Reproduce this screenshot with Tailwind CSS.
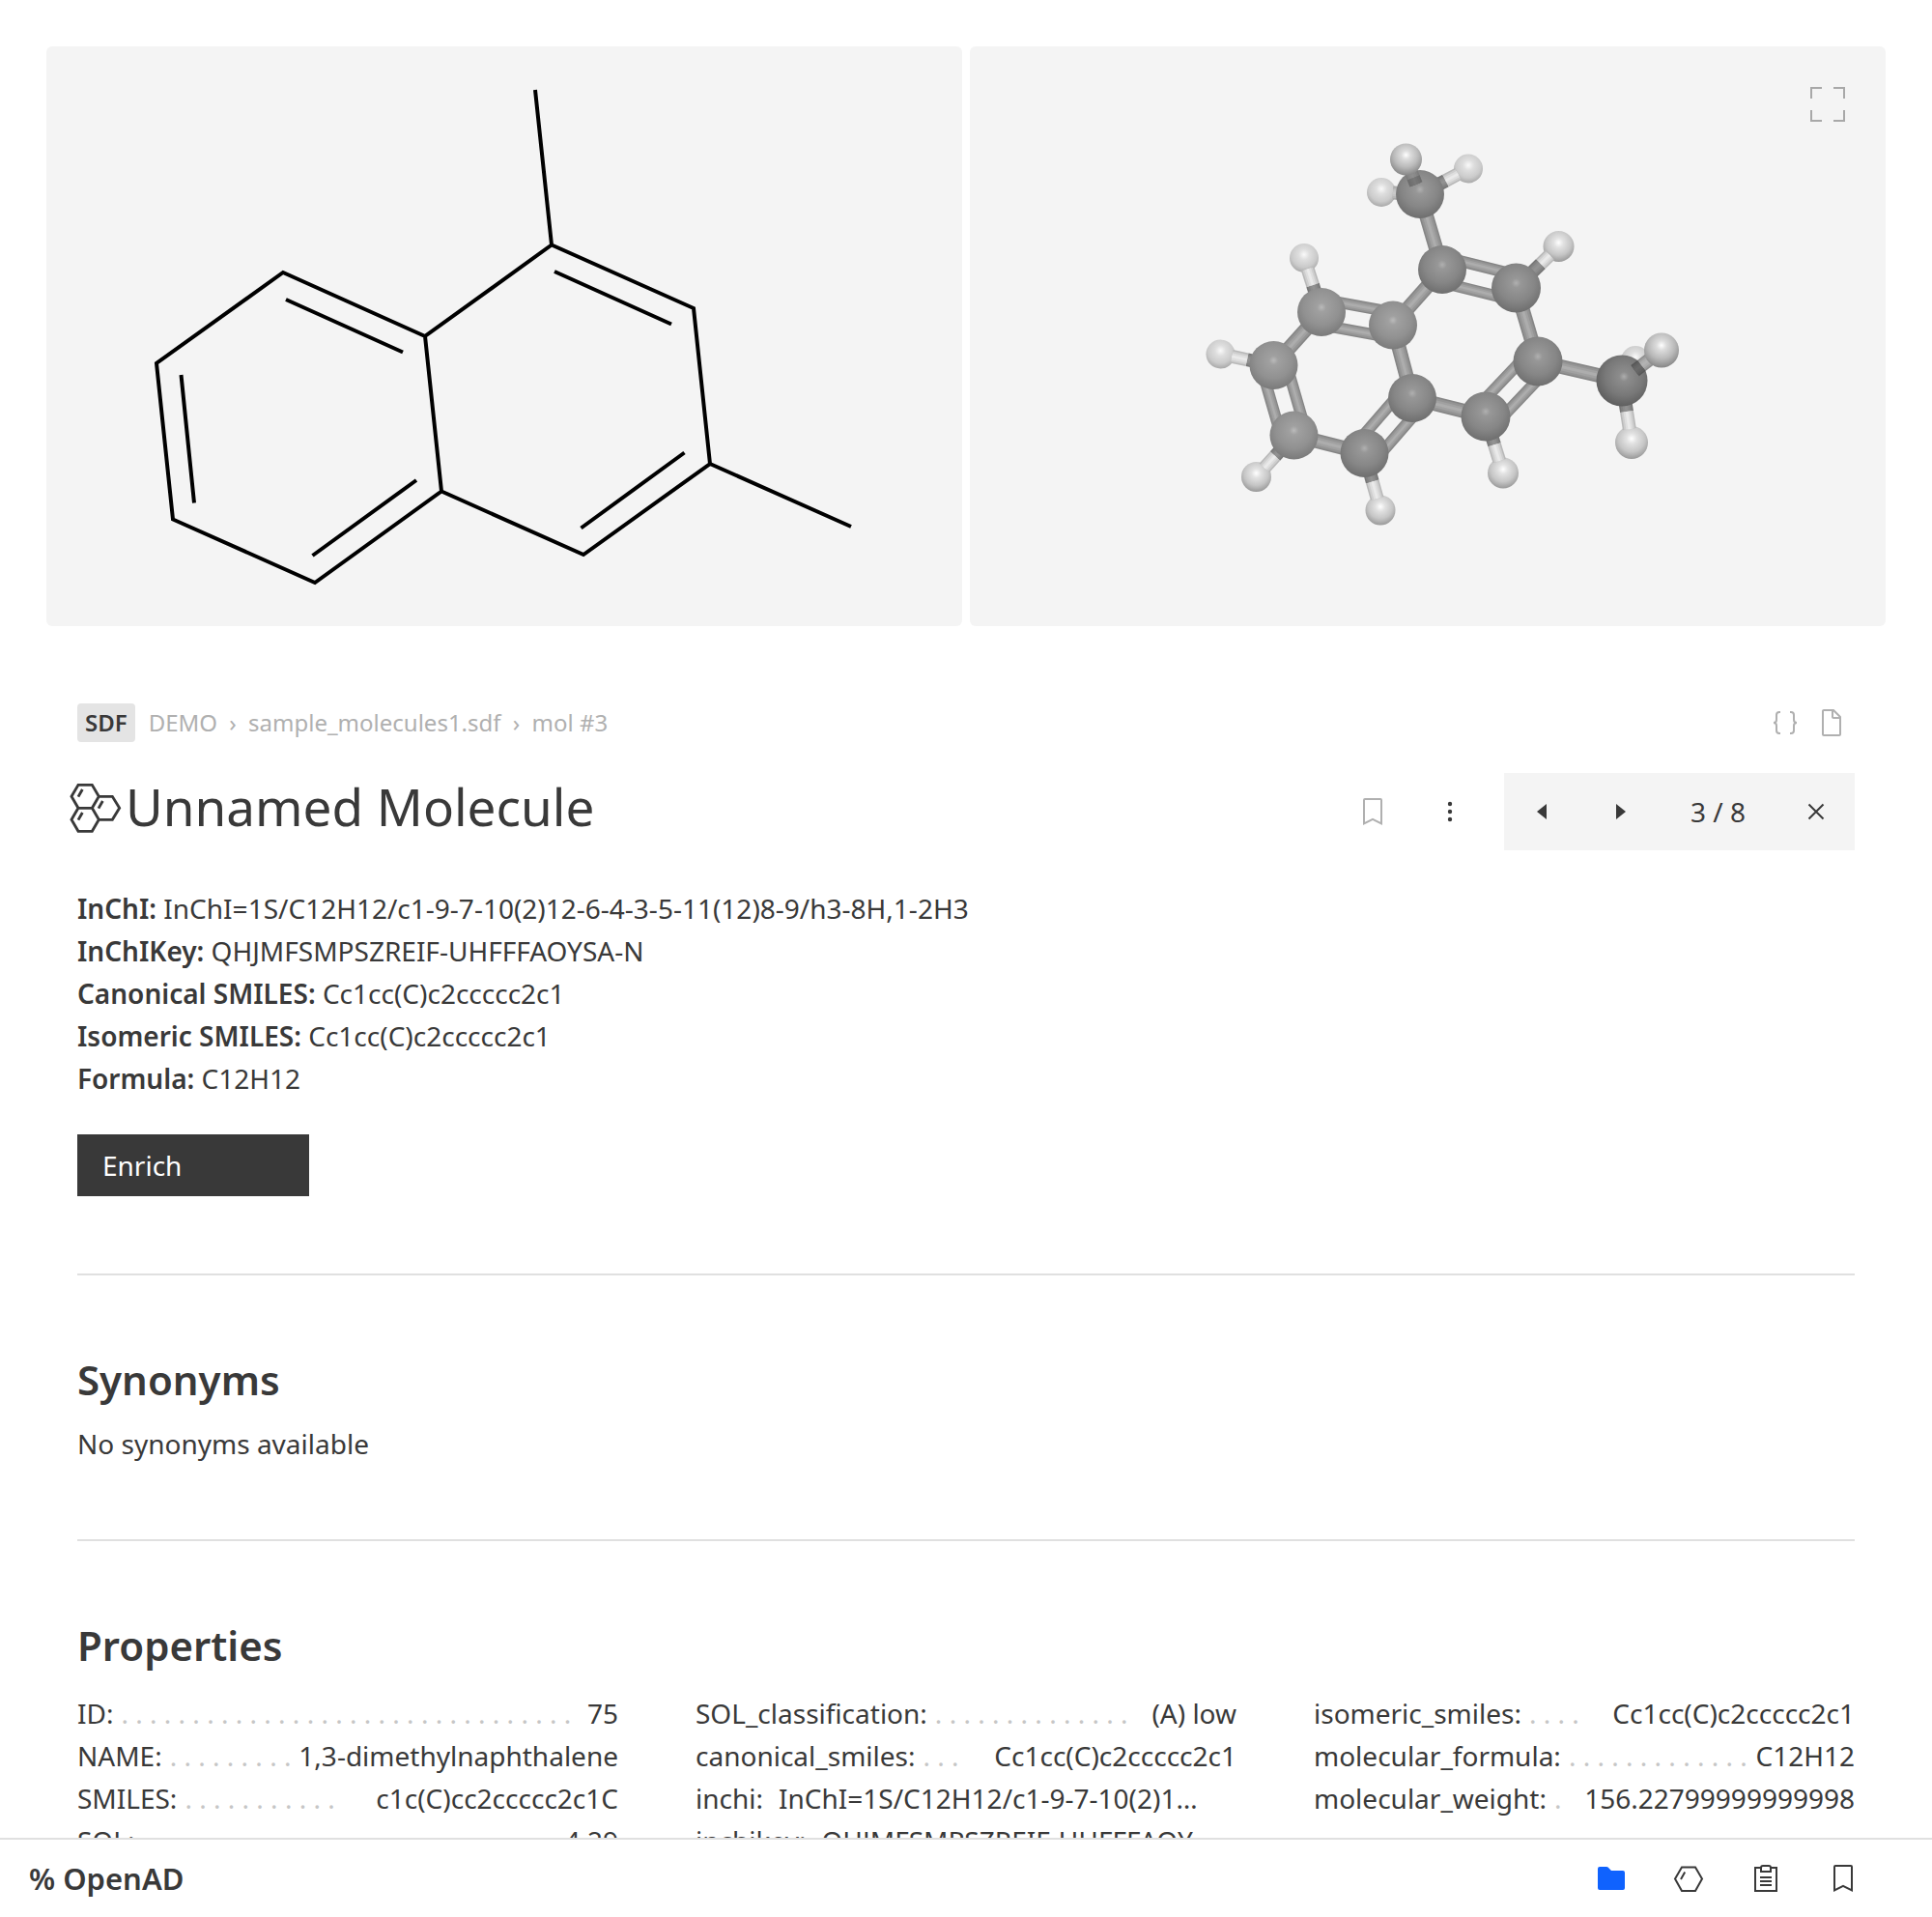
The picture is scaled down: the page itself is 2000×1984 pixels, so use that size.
<!DOCTYPE html>
<html lang="en">
<head>
<meta charset="utf-8">
<meta name="viewport" content="width=device-width, initial-scale=1">
<title>OpenAD</title>
<script src="https://cdn.jsdelivr.net/npm/@tailwindcss/browser@4"></script>
</head>
<body class="flex h-screen flex-col bg-white font-['Noto_Sans',sans-serif] text-[28px] leading-[44px] text-[#393939]">
<main class="min-h-0 flex-1 overflow-y-auto p-12 pb-0 [scrollbar-width:none]">

  <div class="grid grid-cols-2 gap-2">
    <div class="h-[600px] overflow-hidden rounded-md bg-[#f4f4f4]">
      <svg class="h-full w-full" viewBox="48 48 948 600" fill="none" stroke="#000" stroke-width="4" role="img" aria-label="2D structure">
        <path d="M554 93 571 253.500 718 319 735 480 604 574 457 508.500 440 348 571 253.500M735 480 881 545M440 348 293 282 162 376 179 537.500 326 603 457 508.500"/>
        <path d="M574 281 695 335.500M296 310 417 364.500M187.500 388 201 520.500M431 497 323.500 575M708.500 468.500 601.500 546.500"/>
      </svg>
    </div>
    <div class="relative h-[600px] overflow-hidden rounded-md bg-[#f4f4f4]">
      <svg id="model" class="h-full w-full" viewBox="1004 48 948 600" role="img" aria-label="3D structure">
        <defs>
          <radialGradient id="c" cx=".5" cy=".4" r=".62"><stop offset="0" stop-color="#b0b0b0"/><stop offset=".15" stop-color="#979797"/><stop offset=".6" stop-color="#868686"/><stop offset="1" stop-color="#6c6c6c"/></radialGradient>
          <radialGradient id="d" cx=".54" cy=".42" r=".62"><stop offset="0" stop-color="#acacac"/><stop offset=".15" stop-color="#8c8c8c"/><stop offset=".6" stop-color="#787878"/><stop offset="1" stop-color="#5a5a5a"/></radialGradient>
          <radialGradient id="l" cx=".5" cy=".4" r=".62"><stop offset="0" stop-color="#bababa"/><stop offset=".15" stop-color="#a0a0a0"/><stop offset=".6" stop-color="#919191"/><stop offset="1" stop-color="#787878"/></radialGradient>
          <radialGradient id="h" cx=".5" cy=".38" r=".62"><stop offset="0" stop-color="#fff"/><stop offset=".25" stop-color="#e2e2e2"/><stop offset=".65" stop-color="#c6c6c6"/><stop offset="1" stop-color="#999"/></radialGradient>
          <radialGradient id="f" cx=".5" cy=".38" r=".62"><stop offset="0" stop-color="#fafafa"/><stop offset=".3" stop-color="#dedede"/><stop offset=".7" stop-color="#cbcbcb"/><stop offset="1" stop-color="#a8a8a8"/></radialGradient>
          <radialGradient id="k" cx=".5" cy=".36" r=".64"><stop offset="0" stop-color="#fff"/><stop offset=".22" stop-color="#dcdcdc"/><stop offset=".6" stop-color="#bababa"/><stop offset="1" stop-color="#868686"/></radialGradient>
        </defs>
      </svg>
      <button type="button" aria-label="Full screen" class="absolute top-[42px] right-[42px] size-9 cursor-pointer">
        <svg class="size-9" viewBox="0 0 36 36" fill="none" stroke="#a8a8a8" stroke-width="2"><path d="M1 12V1H12M24 1H35V12M35 24V35H24M12 35H1V24"/></svg>
      </button>
    </div>
  </div>

  <div class="px-8 pt-20">
    <div class="flex h-10 items-center justify-between">
      <nav aria-label="Breadcrumb" class="flex items-center text-2xl leading-10 text-[#b0b0b0]">
        <span class="mr-3.5 rounded bg-[#e4e4e4] px-2 font-semibold text-[#393939]">SDF</span>
        <a href="#demo">DEMO</a><span class="w-8 text-center">›</span>
        <a href="#file">sample_molecules1.sdf</a><span class="w-8 text-center">›</span>
        <a href="#mol">mol #3</a>
      </nav>
      <div class="flex gap-4 pr-2 text-[#b0b0b0]">
        <button type="button" aria-label="View JSON" class="size-8"><svg class="size-8" viewBox="0 0 32 32" fill="none" stroke="currentColor" stroke-width="2"><path d="M11 5H10a3 3 0 0 0-3 3v5a3 3 0 0 1-3 3 3 3 0 0 1 3 3v5a3 3 0 0 0 3 3h1M21 5h1a3 3 0 0 1 3 3v5a3 3 0 0 0 3 3 3 3 0 0 0-3 3v5a3 3 0 0 1-3 3h-1"/></svg></button>
        <button type="button" aria-label="View file" class="size-8"><svg class="size-8" viewBox="0 0 32 32" fill="currentColor"><path d="M25.700 9.300l-7-7C18.500 2.100 18.300 2 18 2H8C6.900 2 6 2.900 6 4v24c0 1.100.9 2 2 2h16c1.100 0 2-.9 2-2V10c0-.3-.1-.5-.3-.7zM18 4.400l5.600 5.600H18zM24 28H8V4h8v6c0 1.100.9 2 2 2h6z"/></svg></button>
      </div>
    </div>

    <div class="mt-8 flex h-20 items-center justify-between">
      <h1 class="-ml-2 flex items-center gap-1 pb-1.5 text-[53px] leading-[64px]">
        <svg class="size-[54px]" viewBox="36 60 162 162" fill="none" stroke="currentColor" stroke-width="8.500"><path d="M63 67H106L127 103 106 139H63L42 103zM106 139 127 175 106 211H63L42 175 63 139M127 103H169L191 139 169 175H127M76 81 63 104M139 117 126 140M76 153 63 176"/></svg>
        <span class="pb-1">Unnamed Molecule</span>
      </h1>
      <div class="flex h-20">
        <button type="button" aria-label="Bookmark" class="flex w-20 items-center justify-center text-[#b0b0b0]"><svg class="size-8" viewBox="0 0 32 32" fill="currentColor"><path d="M24 4V26.750l-7.100-3.590-.9-.45-.9.45L8 26.750V4H24m0-2H8A2 2 0 0 0 6 4V30l10-5.050L26 30V4a2 2 0 0 0-2-2z"/></svg></button>
        <button type="button" aria-label="More" class="flex w-20 items-center justify-center"><svg class="size-8" viewBox="0 0 32 32" fill="currentColor"><circle cx="16" cy="8" r="2.200"/><circle cx="16" cy="16" r="2.200"/><circle cx="16" cy="24" r="2.200"/></svg></button>
        <div class="ml-4 flex bg-[#f4f4f4]">
          <button type="button" aria-label="Previous" class="flex w-20 items-center justify-center"><svg class="size-8" viewBox="0 0 32 32" fill="currentColor"><path d="M20 24 10 16 20 8z"/></svg></button>
          <button type="button" aria-label="Next" class="flex w-20 items-center justify-center"><svg class="size-8" viewBox="0 0 32 32" fill="currentColor"><path d="M12 8 22 16 12 24z"/></svg></button>
          <span class="flex w-[123px] items-center justify-center">3 / 8</span>
          <button type="button" aria-label="Close" class="flex w-20 items-center justify-center"><svg class="size-8" viewBox="0 0 32 32" fill="none" stroke="currentColor" stroke-width="2"><path d="M8.500 8.500l15 15M23.500 8.500l-15 15"/></svg></button>
        </div>
      </div>
    </div>

    <div class="mt-[38px]">
      <p><b class="font-semibold">InChI:</b> InChI=1S/C12H12/c1-9-7-10(2)12-6-4-3-5-11(12)8-9/h3-8H,1-2H3</p>
      <p><b class="font-semibold">InChIKey:</b> QHJMFSMPSZREIF-UHFFFAOYSA-N</p>
      <p><b class="font-semibold">Canonical SMILES:</b> Cc1cc(C)c2ccccc2c1</p>
      <p><b class="font-semibold">Isomeric SMILES:</b> Cc1cc(C)c2ccccc2c1</p>
      <p><b class="font-semibold">Formula:</b> C12H12</p>
    </div>
    <button type="button" class="mt-9 block h-16 w-60 bg-[#393939] px-[26px] text-left text-white">Enrich</button>

    <section class="mt-20 border-t-2 border-[#e0e0e0] pt-20 pb-[77px]">
      <h2 class="text-[42px] leading-[56px] font-semibold">Synonyms</h2>
      <p class="mt-4">No synonyms available</p>
    </section>

    <section class="border-t-2 border-[#e0e0e0] pt-20 pb-20">
      <h2 class="text-[42px] leading-[56px] font-semibold">Properties</h2>
      <div class="mt-5 grid grid-cols-3 gap-20 whitespace-nowrap">
        <dl>
          <div class="flex gap-2"><dt>ID:</dt><dd class="flex min-w-0 flex-1 justify-between"><span aria-hidden="true" class="text-[#c6c6c6]">. . . . . . . . . . . . . . . . . . . . . . . . . . . . . . . .</span><span>75</span></dd></div>
          <div class="flex gap-2"><dt>NAME:</dt><dd class="flex min-w-0 flex-1 justify-between"><span aria-hidden="true" class="text-[#c6c6c6]">. . . . . . . . .</span><span>1,3-dimethylnaphthalene</span></dd></div>
          <div class="flex gap-2"><dt>SMILES:</dt><dd class="flex min-w-0 flex-1 justify-between"><span aria-hidden="true" class="text-[#c6c6c6]">. . . . . . . . . . .</span><span>c1c(C)cc2ccccc2c1C</span></dd></div>
          <div class="flex gap-2"><dt>SOL:</dt><dd class="flex min-w-0 flex-1 justify-between"><span aria-hidden="true" class="text-[#c6c6c6]">. . . . . . . . . . . . . . . . . . . . . . . . . . . .</span><span>-4.29</span></dd></div>
        </dl>
        <dl>
          <div class="flex gap-2"><dt>SOL_classification:</dt><dd class="flex min-w-0 flex-1 justify-between"><span aria-hidden="true" class="text-[#c6c6c6]">. . . . . . . . . . . . . .</span><span>(A) low</span></dd></div>
          <div class="flex gap-2"><dt>canonical_smiles:</dt><dd class="flex min-w-0 flex-1 justify-between"><span aria-hidden="true" class="text-[#c6c6c6]">. . .</span><span>Cc1cc(C)c2ccccc2c1</span></dd></div>
          <div class="flex gap-4"><dt>inchi:</dt><dd>InChI=1S/C12H12/c1-9-7-10(2)1…</dd></div>
          <div class="flex gap-4"><dt>inchikey:</dt><dd>QHJMFSMPSZREIF-UHFFFAOY…</dd></div>
        </dl>
        <dl>
          <div class="flex gap-2"><dt>isomeric_smiles:</dt><dd class="flex min-w-0 flex-1 justify-between"><span aria-hidden="true" class="text-[#c6c6c6]">. . . .</span><span>Cc1cc(C)c2ccccc2c1</span></dd></div>
          <div class="flex gap-2"><dt>molecular_formula:</dt><dd class="flex min-w-0 flex-1 justify-between"><span aria-hidden="true" class="text-[#c6c6c6]">. . . . . . . . . . . . .</span><span>C12H12</span></dd></div>
          <div class="flex gap-2"><dt>molecular_weight:</dt><dd class="flex min-w-0 flex-1 justify-between"><span aria-hidden="true" class="text-[#c6c6c6]">.</span><span>156.22799999999998</span></dd></div>
        </dl>
      </div>
    </section>
  </div>
</main>

<footer class="flex shrink-0 items-center justify-between border-t-2 border-[#e0e0e0] bg-white pr-[52px] pl-[30px]">
  <a href="#home" class="text-[31px] font-semibold">% OpenAD</a>
  <nav aria-label="Main" class="flex">
    <a href="#files" aria-label="Files" class="flex size-20 items-center justify-center text-[#0f62fe]"><svg class="size-8" viewBox="0 0 32 32" fill="currentColor"><path d="M4 4h7.200a2 2 0 0 1 1.400.6L16 8h12a2 2 0 0 1 2 2v16a2 2 0 0 1-2 2H4a2 2 0 0 1-2-2V6a2 2 0 0 1 2-2z"/></svg></a>
    <a href="#molecules" aria-label="Molecules" class="flex size-20 items-center justify-center"><svg class="size-8" viewBox="0 0 32 32" fill="none" stroke="currentColor" stroke-width="2"><path d="M9 4.500H23L30 16.500 23 29H9L2 16.500zM12.200 9.500 8 17"/></svg></a>
    <a href="#results" aria-label="Results" class="flex size-20 items-center justify-center"><svg class="size-8" viewBox="0 0 32 32" fill="none" stroke="currentColor" stroke-width="2"><path d="M11 5H5V29H27V5H21M11 9H21V5a2 2 0 0 0-2-2H13a2 2 0 0 0-2 2zM10 15H22M10 19H22M10 23H22"/></svg></a>
    <a href="#bookmarks" aria-label="Bookmarks" class="flex size-20 items-center justify-center"><svg class="size-8" viewBox="0 0 32 32" fill="currentColor"><path d="M24 4V26.750l-7.100-3.590-.9-.45-.9.45L8 26.750V4H24m0-2H8A2 2 0 0 0 6 4V30l10-5.050L26 30V4a2 2 0 0 0-2-2z"/></svg></a>
  </nav>
</footer>

<script>
  // Ball-and-stick model: atoms are [x, y, radius, gradient], bonds join atom keys.
  const atoms = {
    c1:[1470,201,25,'c'], c2:[1493,279,25,'c'], c3:[1569.5,298,25.5,'c'], c4:[1592,374,25.5,'c'],
    c5:[1679,394,26.5,'d'], c6:[1538,431,25.5,'c'], c7:[1462,412,25,'c'], c8:[1412.5,469,25,'c'],
    c9:[1339.5,450.5,25,'l'], c10:[1318.5,378,25,'l'], c11:[1368,323,25,'l'], c12:[1442,336.5,25,'l'],
    h1:[1455.5,165,16.5,'k'], h2:[1520,174.5,15,'f'], h3:[1430,199,15,'f'], h4:[1613.5,255,16,'h'],
    h5:[1350,267,15,'f'], h6:[1263.5,366.5,15,'f'], h7:[1300.5,493.5,15.5,'h'], h8:[1429,528,15.5,'h'],
    h9:[1556,489.5,16,'h'], h10:[1720,362.5,18,'k'], h11:[1693,373,15,'f'], h12:[1689,458,17,'h']
  };
  const svg = document.getElementById('model');
  const add = (tag, attrs) => {
    const el = document.createElementNS('http://www.w3.org/2000/svg', tag);
    for (const k in attrs) el.setAttribute(k, attrs[k]);
    svg.append(el);
  };
  const stick = (x1, y1, x2, y2, width, shades) => shades.forEach((stroke, i) =>
    add('line', { x1, y1, x2, y2, stroke, 'stroke-width': width * [1, .78, .5, .2][i] }));
  const grey = ['#858585', '#949494', '#a1a1a1', '#adadad'];
  const dark = ['#767676', '#828282', '#8c8c8c', '#929292'];
  const pale = ['#b8b8b8', '#cecece', '#dedede', '#eaeaea'];
  const dim = ['#8f8f8f', '#a0a0a0', '#adadad', '#b3b3b3'];
  const ball = k => { const [cx, cy, r, g] = atoms[k]; add('circle', { cx, cy, r, fill: `url(#${g})` }); };
  const bond = (a, b, order = 1) => {
    const [x1, y1] = atoms[a], [x2, y2] = atoms[b], len = Math.hypot(x2 - x1, y2 - y1);
    const nx = -(y2 - y1) / len, ny = (x2 - x1) / len;
    (order === 2 ? [-13, 13] : [0]).forEach(o =>
      stick(x1 + nx * o, y1 + ny * o, x2 + nx * o, y2 + ny * o, order === 2 ? 12 : 15, grey));
  };
  // Carbon–hydrogen stick from `start` to `end`, dark up to `split` and light beyond it.
  const hBond = (c, h, split, near = dark, far = pale, start = 0) => {
    const [x1, y1] = atoms[c], [x2, y2, r] = atoms[h], end = 1 - (r - 3) / Math.hypot(x2 - x1, y2 - y1);
    const at = t => [x1 + (x2 - x1) * t, y1 + (y2 - y1) * t];
    stick(...at(start), ...at(split), 14, near);
    stick(...at(split), ...at(end), 14, far);
  };
  ['h2','h3','h4','h5','h6','h7','h8','h9','h11','h12'].forEach(ball);
  hBond('c1','h2',.53); hBond('c1','h3',.3,dark,['#a8a8a8','#b8b8b8','#c4c4c4','#cacaca']);
  hBond('c3','h4',.58); hBond('c11','h5',.5); hBond('c10','h6',.5); hBond('c9','h7',.5);
  hBond('c8','h8',.5); hBond('c6','h9',.5); hBond('c5','h12',.5);
  bond('c1','c2'); bond('c2','c3',2); bond('c3','c4'); bond('c4','c5'); bond('c4','c6',2); bond('c6','c7');
  bond('c7','c12'); bond('c12','c2'); bond('c12','c11',2); bond('c11','c10'); bond('c10','c9',2);
  bond('c9','c8'); bond('c8','c7',2);
  ['c1','c2','c3','c4','c5','c6','c7','c8','c9','c10','c11','c12'].forEach(ball);
  hBond('c1','h1',.48,['#6c6c6c','#707070','#747474','#787878'],['#7c7c7c','#848484','#8a8a8a','#8e8e8e'],.28);
  hBond('c5','h10',.5,['#585858','#606060','#666','#6a6a6a'],dim,.33);
  ball('h1'); ball('h10');
</script>
</body>
</html>
